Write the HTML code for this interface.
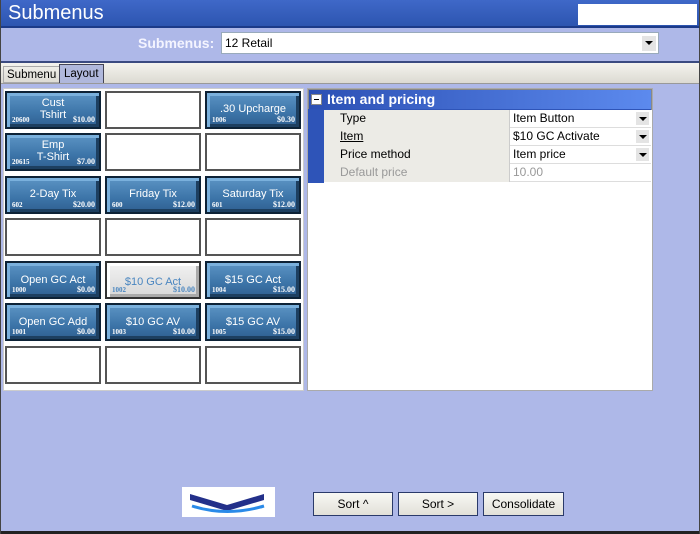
<!DOCTYPE html>
<html><head><style>
*{margin:0;padding:0;box-sizing:border-box}
body{width:700px;height:534px;background:#aeb8e8;font-family:"Liberation Sans",sans-serif;position:relative;overflow:hidden}
.a{position:absolute}
.title{left:0;top:0;width:700px;height:28px;background:linear-gradient(#3f68c8,#2d55b0);border-bottom:2px solid #1c3a88}
.title span{position:absolute;left:8px;top:2px;color:#fff;font-size:20px}
.cell{position:absolute;width:96px;height:38px;background:#fff;border:2px solid #555}
.btn{position:absolute;width:96px;height:38px;border:2px solid #0d2236;background:linear-gradient(#5c94c4,#3c74a8 60%,#2f5f90);box-shadow:inset 3px 3px 0 #7ab0dc,inset -3px -3px 0 #1d3f60;color:#fff;font-size:11px;text-align:center}
.btn .n{position:absolute;left:5px;bottom:3px;font-size:7px;font-family:"Liberation Serif",serif;font-weight:bold}
.btn .p{position:absolute;right:4px;bottom:3px;font-size:8px;font-family:"Liberation Serif",serif;font-weight:bold}
.sel{background:linear-gradient(#f2f2f2,#d8d8d8);box-shadow:inset 3px 3px 0 #fff,inset -3px -3px 0 #aaa;color:#4a86c0;border-color:#333}
.pb{position:absolute;height:24px;background:linear-gradient(#f8f8f4,#e2e0d8);border:1px solid #2a3a6a;font-size:12px;text-align:center;line-height:22px}
.row{position:absolute;left:16px;width:327px;height:18px;font-size:12px;border-bottom:1px solid #ddd}
.row .k{position:absolute;left:0;top:0;width:186px;height:18px;background:#ecebe6;padding-left:16px;line-height:17px;border-right:1px solid #ccc}
.row .v{position:absolute;left:187px;top:0;line-height:17px;padding-left:2px}
.dd{position:absolute;right:2px;top:2px;width:13px;height:13px;background:#e4e4e4}
.dd:after{content:"";position:absolute;left:3px;top:5px;border:4px solid transparent;border-top:4px solid #000;border-bottom:0}
</style></head><body>
<div class="a title"><span>Submenus</span></div>
<div class="a" style="left:578px;top:4px;width:119px;height:21px;background:#fff"></div>
<div class="a" style="left:138px;top:35px;color:#f4f4ff;font-size:14px;font-weight:bold">Submenus:</div>
<div class="a" style="left:221px;top:32px;width:438px;height:22px;background:#fff;border:1px solid #9ab;font-size:12px;line-height:20px;padding-left:3px">12 Retail<div class="dd" style="top:3px;width:14px;height:15px"></div></div>
<div class="a" style="left:0;top:61px;width:700px;height:2px;background:#3a4a80"></div>
<div class="a" style="left:0;top:63px;width:700px;height:20px;background:linear-gradient(#f4f3ee,#dcdad2)"></div>
<div class="a" style="left:3px;top:66px;font-size:11.5px;padding:2px 3px;border:1px solid #aaa;height:17px">Submenu</div>
<div class="a" style="left:59px;top:64px;font-size:11.5px;padding:3px 4px;background:#b0b8dc;border:1px solid #445;height:19px;border-bottom:none">Layout</div>
<div class="a" style="left:0;top:83px;width:700px;height:1px;background:#999"></div>
<div class="a" style="left:3px;top:88px;width:301px;height:303px;background:#fff;border:1px solid #ccc"></div>

<div class="btn" style="left:5px;top:91px"><div style="margin-top:4px;line-height:12px">Cust<br>Tshirt</div><span class="n">20600</span><span class="p">$10.00</span></div>
<div class="cell" style="left:105px;top:91px"></div>
<div class="btn" style="left:205px;top:91px"><div style="margin-top:10px">.30 Upcharge</div><span class="n">1006</span><span class="p">$0.30</span></div>
<div class="btn" style="left:5px;top:133px"><div style="margin-top:4px;line-height:12px">Emp<br>T-Shirt</div><span class="n">20615</span><span class="p">$7.00</span></div>
<div class="cell" style="left:105px;top:133px"></div>
<div class="cell" style="left:205px;top:133px"></div>
<div class="btn" style="left:5px;top:176px"><div style="margin-top:10px">2-Day Tix</div><span class="n">602</span><span class="p">$20.00</span></div>
<div class="btn" style="left:105px;top:176px"><div style="margin-top:10px">Friday Tix</div><span class="n">600</span><span class="p">$12.00</span></div>
<div class="btn" style="left:205px;top:176px"><div style="margin-top:10px">Saturday Tix</div><span class="n">601</span><span class="p">$12.00</span></div>
<div class="cell" style="left:5px;top:218px"></div>
<div class="cell" style="left:105px;top:218px"></div>
<div class="cell" style="left:205px;top:218px"></div>
<div class="btn" style="left:5px;top:261px"><div style="margin-top:11px">Open GC Act</div><span class="n">1000</span><span class="p">$0.00</span></div>
<div class="btn sel" style="left:105px;top:261px"><div style="margin-top:13px">$10 GC Act</div><span class="n">1002</span><span class="p">$10.00</span></div>
<div class="btn" style="left:205px;top:261px"><div style="margin-top:11px">$15 GC Act</div><span class="n">1004</span><span class="p">$15.00</span></div>
<div class="btn" style="left:5px;top:303px"><div style="margin-top:11px">Open GC Add</div><span class="n">1001</span><span class="p">$0.00</span></div>
<div class="btn" style="left:105px;top:303px"><div style="margin-top:11px">$10 GC AV</div><span class="n">1003</span><span class="p">$10.00</span></div>
<div class="btn" style="left:205px;top:303px"><div style="margin-top:11px">$15 GC AV</div><span class="n">1005</span><span class="p">$15.00</span></div>
<div class="cell" style="left:5px;top:346px"></div>
<div class="cell" style="left:105px;top:346px"></div>
<div class="cell" style="left:205px;top:346px"></div>

<div class="a" style="left:307px;top:88px;width:346px;height:303px;background:#fff;border:1px solid #aaa"></div>
<div class="a" style="left:308px;top:89px;width:344px;height:94px;background:#2e54b8;border:1px solid #888"></div>
<div class="a" style="left:309px;top:90px;width:342px;height:19px;background:linear-gradient(90deg,#2c50b4,#5c8aee)"></div>
<div class="a" style="left:311px;top:94px;width:11px;height:11px;background:#fff;border:1px solid #888"><div style="position:absolute;left:2px;top:4px;width:5px;height:1px;background:#000"></div></div>
<div class="a" style="left:327px;top:91px;color:#fff;font-size:14px;font-weight:bold">Item and pricing</div>
<div style="position:absolute;left:308px;top:110px;width:344px;height:73px;background:#fff"></div>
<div class="row" style="left:324px;top:110px"><div class="k">Type</div><div class="v">Item Button</div><div class="dd"></div></div>
<div class="row" style="left:324px;top:128px"><div class="k" style="text-decoration:underline">Item</div><div class="v">$10 GC Activate</div><div class="dd"></div></div>
<div class="row" style="left:324px;top:146px"><div class="k">Price method</div><div class="v">Item price</div><div class="dd"></div></div>
<div class="row" style="left:324px;top:164px;color:#999"><div class="k">Default price</div><div class="v">10.00</div></div>
<div class="a" style="left:308px;top:109px;width:16px;height:74px;background:#2e54b8"></div>

<div class="a" style="left:182px;top:487px;width:93px;height:30px;background:#fff">
<svg width="93" height="30"><path d="M8 7 L45 18 L82 7 L82 13 L45 24 L8 13Z" fill="#23308a"/><path d="M10 19 Q45 30 82 19" stroke="#2a8ae8" stroke-width="3" fill="none"/></svg></div>
<div class="pb" style="left:313px;top:492px;width:80px">Sort ^</div>
<div class="pb" style="left:398px;top:492px;width:80px">Sort &gt;</div>
<div class="pb" style="left:483px;top:492px;width:81px">Consolidate</div>
<div class="a" style="left:0;top:531px;width:700px;height:3px;background:#222"></div>
<div class="a" style="left:0;top:0;width:1px;height:534px;background:#444"></div>
<div class="a" style="left:699px;top:0;width:1px;height:534px;background:#444"></div>
</body></html>
